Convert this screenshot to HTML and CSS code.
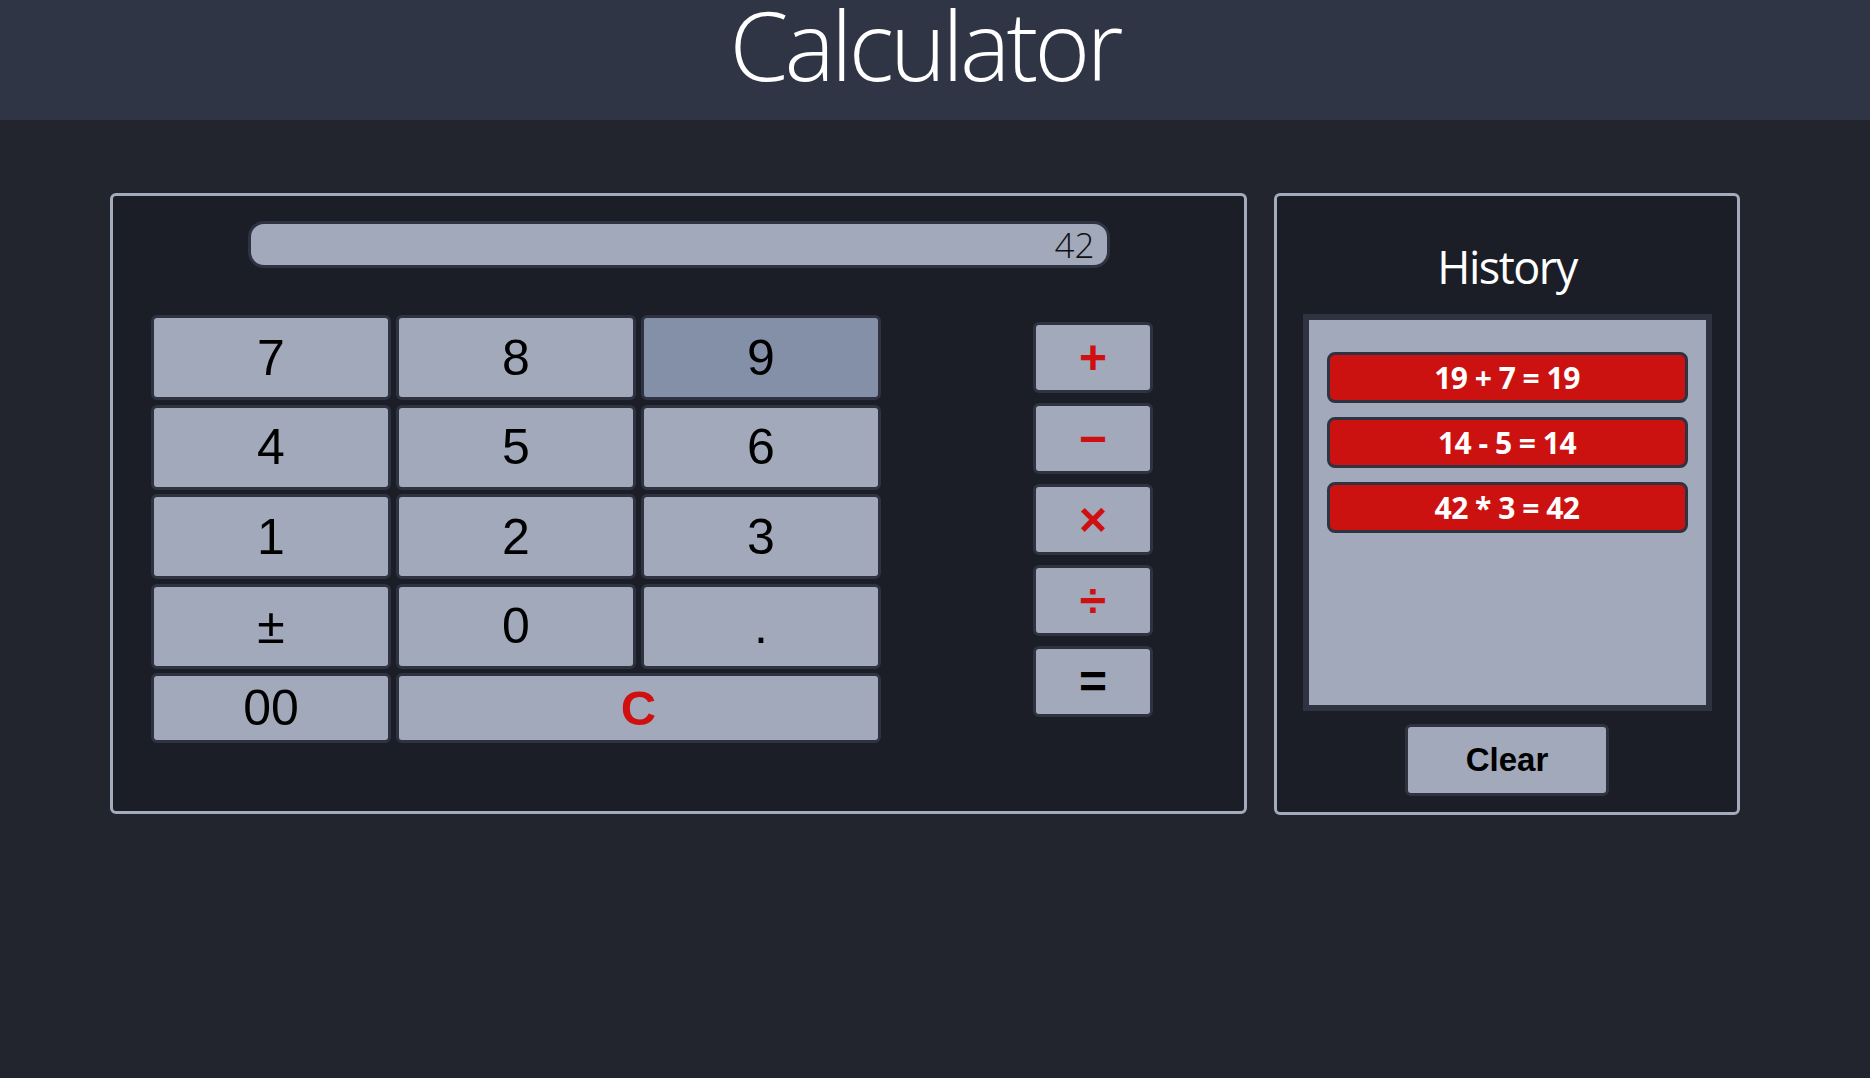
FILE: index.html
```html
<!DOCTYPE html>
<html lang="en">
<head>
<meta charset="utf-8">
<title>Calculator</title>
<link rel="stylesheet" href="styles.css">
</head>
<body>
<header class="top">
  <h1 class="title">Calculator</h1>
</header>
<main class="main">
  <section class="calc">
    <div class="screen">42</div>
    <div class="pad-row">
      <div class="keypad">
        <button class="key">7</button>
        <button class="key">8</button>
        <button class="key key-hover">9</button>
        <button class="key">4</button>
        <button class="key">5</button>
        <button class="key">6</button>
        <button class="key">1</button>
        <button class="key">2</button>
        <button class="key">3</button>
        <button class="key">±</button>
        <button class="key">0</button>
        <button class="key">.</button>
        <button class="key">00</button>
        <button class="key key-clear">C</button>
      </div>
      <div class="ops">
        <button class="op op-red">+</button>
        <button class="op op-red">−</button>
        <button class="op op-red">×</button>
        <button class="op op-red">÷</button>
        <button class="op">=</button>
      </div>
    </div>
  </section>
  <section class="history">
    <h2 class="history-title">History</h2>
    <div class="history-list">
      <div class="history-item">19 + 7 = 19</div>
      <div class="history-item">14 - 5 = 14</div>
      <div class="history-item">42 * 3 = 42</div>
    </div>
    <button class="clear-btn">Clear</button>
  </section>
</main>
</body>
</html>
```

FILE: styles.css
```css
* {
  box-sizing: border-box;
}

html, body {
  margin: 0;
  padding: 0;
}

body {
  background: #22252e;
  min-height: 1078px;
  font-family: "Liberation Sans", Arial, sans-serif;
}

.top {
  height: 120px;
  background: #303545;
  text-align: center;
  padding-right: 21px;
}

.title {
  margin: 0;
  font-family: "Open Sans", sans-serif;
  font-weight: 300;
  font-size: 95px;
  line-height: 88px;
  letter-spacing: -3.8px;
  color: #ffffff;
}

.main {
  display: flex;
  align-items: flex-start;
  gap: 27px;
  padding: 73px 0 0 110px;
}

.calc {
  width: 1137px;
  height: 621px;
  border: 3px solid #a3abbc;
  border-radius: 6px;
  background: #1b1e27;
  padding-top: 25px;
}

.screen {
  width: 862px;
  height: 47px;
  margin: 0 auto;
  border: 3px solid #2f3341;
  border-radius: 16px;
  background: #a1a9bb;
  display: flex;
  align-items: center;
  justify-content: flex-end;
  padding-right: 12px;
  font-family: "Open Sans", sans-serif;
  font-weight: 300;
  font-size: 35px;
  line-height: 41px;
  color: #111;
}

.pad-row {
  display: flex;
  align-items: flex-start;
  margin-top: 47px;
  padding-left: 38px;
}

.keypad {
  display: grid;
  grid-template-columns: 240px 240px 240px;
  grid-template-rows: 85px 85px 85px 85px 70px;
  column-gap: 5px;
  row-gap: 4.5px;
}

.key,
.op,
.clear-btn {
  margin: 0;
  padding: 0;
  border: 3px solid #2f3341;
  border-radius: 6px;
  background: #a1a9bb;
  color: #000;
  display: flex;
  align-items: center;
  justify-content: center;
  font-family: "Liberation Sans", Arial, sans-serif;
}

.key {
  font-size: 50px;
}

.key-hover {
  background: #8490a8;
}

.key-clear {
  grid-column: span 2;
  color: #d01010;
  font-weight: bold;
  font-size: 49px;
}

.ops {
  display: flex;
  flex-direction: column;
  gap: 10px;
  margin-left: 152px;
  margin-top: 7px;
}

.op {
  width: 120px;
  height: 71px;
  font-size: 48px;
  font-weight: bold;
}

.op-red {
  color: #d01010;
}

.history {
  width: 466px;
  height: 622px;
  border: 3px solid #a3abbc;
  border-radius: 6px;
  background: #1b1e27;
  padding-top: 40px;
  display: flex;
  flex-direction: column;
  align-items: center;
}

.history-title {
  margin: 0;
  font-family: "Open Sans", sans-serif;
  font-weight: 400;
  font-size: 45px;
  line-height: 61px;
  letter-spacing: -1.5px;
  color: #ffffff;
}

.history-list {
  width: 409px;
  height: 397px;
  margin-top: 17px;
  border: 6px solid #2f3341;
  background: #a1a9bb;
  padding: 32px 18px 0;
  display: flex;
  flex-direction: column;
  gap: 14px;
}

.history-item {
  height: 51px;
  border: 3px solid #2f3341;
  border-radius: 8px;
  background: #cc1111;
  color: #ffffff;
  display: flex;
  align-items: center;
  justify-content: center;
  font-family: "Open Sans", sans-serif;
  font-weight: 700;
  font-size: 30px;
  letter-spacing: -0.5px;
}

.clear-btn {
  width: 204px;
  height: 72px;
  margin-top: 13px;
  font-size: 33px;
  font-weight: bold;
}
```
